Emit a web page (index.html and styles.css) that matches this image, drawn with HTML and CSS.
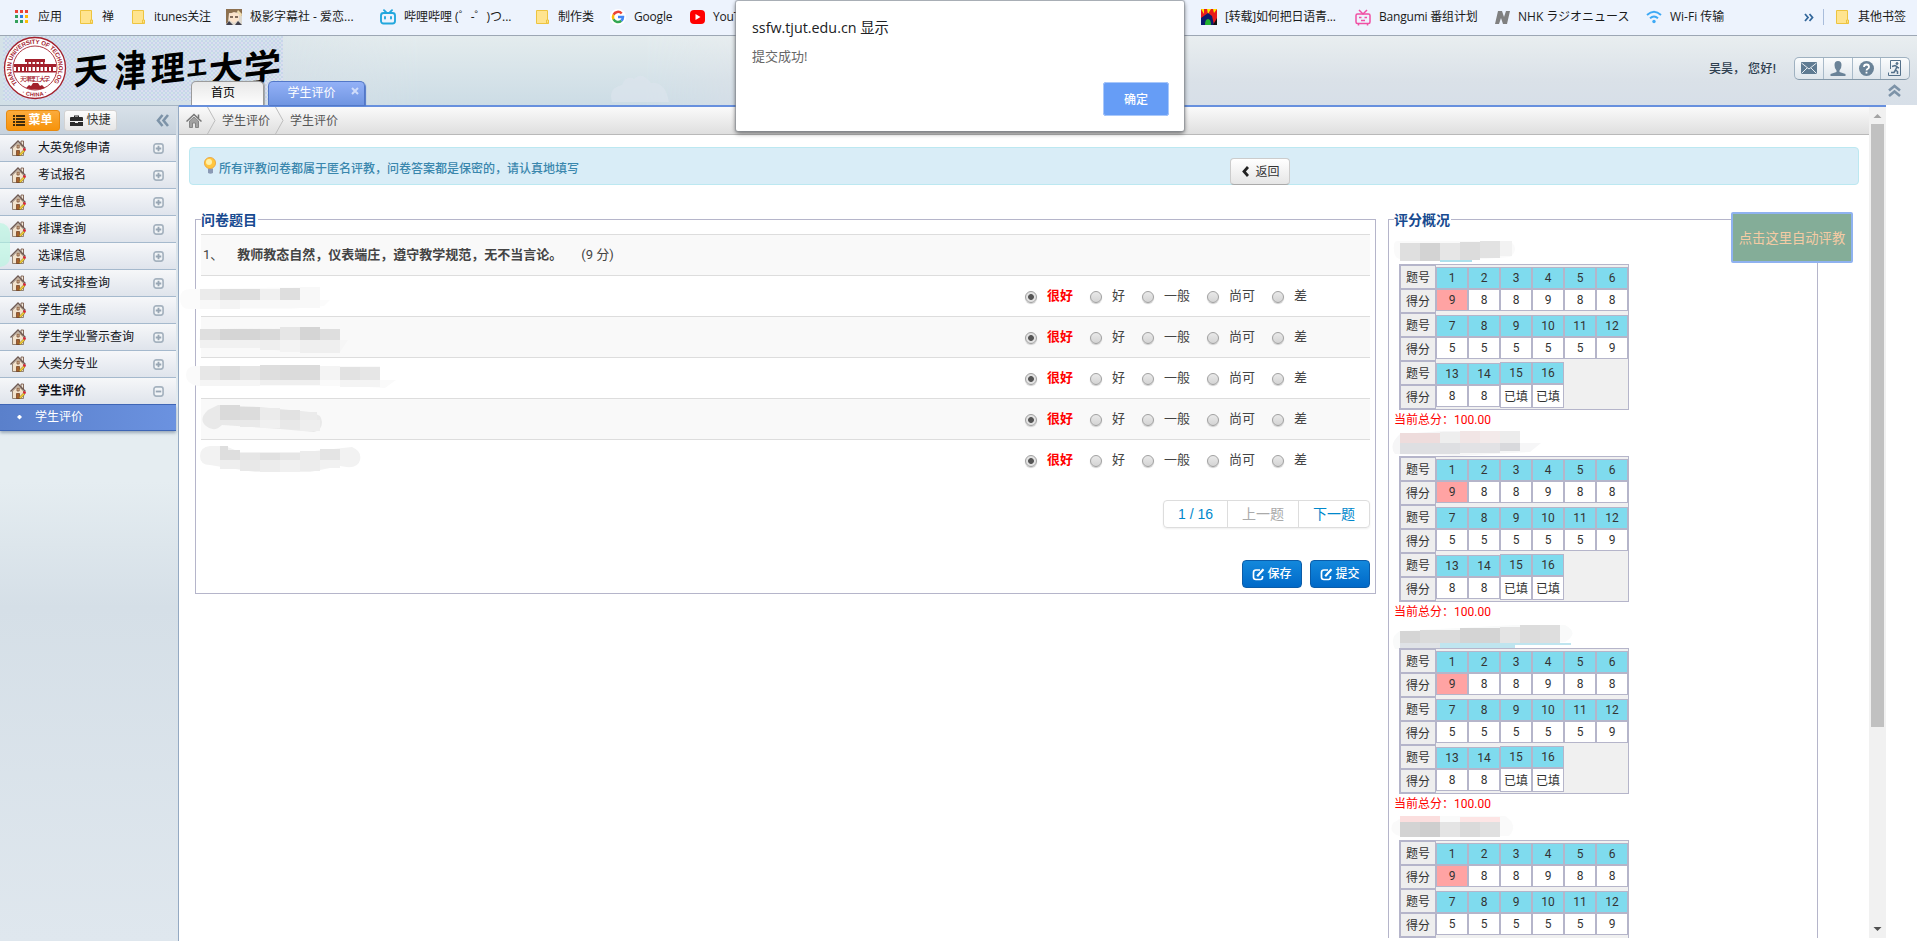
FILE: index.html
```html
<!DOCTYPE html>
<html lang="zh-CN">
<head>
<meta charset="utf-8">
<title>学生评价</title>
<link rel="stylesheet" href="styles.css">
</head>
<body>
<svg class="defs" width="0" height="0">
  <symbol id="folder" viewBox="0 0 14 16"><path d="M.5 1.500h11v10h1v3h-12z" fill="#ffe48f" stroke="#edc440"/><path d="M10.500 14v-3h2v3z" fill="#ffe48f" stroke="#edc440"/></symbol>
  <symbol id="house" viewBox="0 0 16 16"><path d="M11 1h2.500v5H11z" fill="#f0e9dc" stroke="#6d4a3a" stroke-width=".8"/><path d="M2.500 8v7.500h11V8L8 2.500z" fill="#f2e2cc" stroke="#7d6a58" stroke-width=".8"/><path d="M.5 8.500L8 1l7.500 7.500" fill="none" stroke="#6f5a52" stroke-width="1.300"/><path d="M7 5h2.200v3H7z" fill="#d8b28c" stroke="#6b4632" stroke-width=".7"/><path d="M6.500 10.500h3v5h-3z" fill="#a5602c" stroke="#6b3b1c" stroke-width=".7"/><path d="M9 14.500l4.500-4.500 1.500 1.300-4.500 4.200z" fill="#f6d02f" stroke="#86702a" stroke-width=".6"/><path d="M13.500 8.500l2 2" stroke="#dc2637" stroke-width="2"/></symbol>
  <symbol id="plus" viewBox="0 0 12 12"><rect x="1" y="1" width="10" height="10" rx="2.500" fill="#f1f4f7" stroke="#a5b2bf" stroke-width="1.800"/><path d="M3 6h6M6 3v6" stroke="#98a6b4" stroke-width="2"/></symbol>
  <symbol id="minus" viewBox="0 0 12 12"><rect x="1" y="1" width="10" height="10" rx="2.500" fill="#f1f4f7" stroke="#a5b2bf" stroke-width="1.800"/><path d="M3 6h6" stroke="#98a6b4" stroke-width="2"/></symbol>
  <symbol id="edit" viewBox="0 0 13 13"><path d="M8 2H4Q1.500 2 1.500 4.500v4.800Q1.500 11.500 4 11.500h4.500Q10.500 11.500 10.500 9.300V8" fill="none" stroke="#fff" stroke-width="1.700"/><path d="M5.200 8.200L11.500 1.200" stroke="#fff" stroke-width="2.200"/></symbol>
</svg>

<div class="bookmarks">
  <span class="bm" style="left:15px"><svg width="14" height="14"><g fill="#ea4335"><path d="M0 0h3v3H0zM5 0h3v3H5zM10 0h3v3h-3z"/></g><path d="M0 5h3v3H0zM0 10h3v3H0zM5 10h3v3H5z" fill="#34a05a"/><path d="M5 5h3v3H5z" fill="#2b7de9"/><path d="M10 5h3v3h-3zM10 10h3v3h-3z" fill="#fbbc05"/></svg></span>
  <span class="bm" style="left:38px">应用</span>
  <span class="bm" style="left:80px"><svg width="14" height="16"><use href="#folder"/></svg></span>
  <span class="bm" style="left:102px">禅</span>
  <span class="bm" style="left:132px"><svg width="14" height="16"><use href="#folder"/></svg></span>
  <span class="bm narrow" style="left:154px">itunes关注</span>
  <span class="bm" style="left:226px"><svg width="16" height="16"><rect width="16" height="16" fill="#ddd8cf"/><path d="M0 0h16v7L13 3 8 4 3 4 2 13 0 15z" fill="#8d7050"/><path d="M3 5l5-2 5 2v6l-5 3-5-3z" fill="#fbe3cc"/><path d="M4 8h3M9 8h3" stroke="#5b4538" stroke-width="1.500"/><path d="M0 16l3-4 4 4zM9 16l3-4 4 4z" fill="#40404e"/><path d="M12 1l4 4-1 3-4-5z" fill="#f0dcb0"/></svg></span>
  <span class="bm" style="left:250px">极影字幕社 - 爱恋...</span>
  <span class="bm" style="left:380px"><svg width="16" height="16" fill="none" stroke="#22a7dd" stroke-width="1.900" stroke-linecap="round"><rect x="1" y="4" width="14" height="10.500" rx="2.500"/><path d="M4 1.200l2 2M12 1.200l-2 2M5 8v1.500M11 8v1.500"/></svg></span>
  <span class="bm" style="left:404px">哔哩哔哩 (゜-゜)つ...</span>
  <span class="bm" style="left:536px"><svg width="14" height="16"><use href="#folder"/></svg></span>
  <span class="bm" style="left:558px">制作类</span>
  <span class="bm" style="left:610px"><svg width="16" height="16" fill="none" stroke-width="2.500"><circle cx="8" cy="8" r="8" fill="#fff"/><path d="M11.700 4.500A5 5 0 0 0 3.500 5.700" stroke="#ea4335"/><path d="M3.500 5.700a5 5 0 0 0 0 4.600" stroke="#fbbc05"/><path d="M3.500 10.300a5 5 0 0 0 7.800 1.500" stroke="#34a853"/><path d="M11.300 11.800A5 5 0 0 0 13 8H8" stroke="#4285f4"/></svg></span>
  <span class="bm narrow" style="left:634px">Google</span>
  <span class="bm" style="left:690px"><svg width="15" height="16"><rect y="1" width="15" height="14" rx="4" fill="#f00"/><path d="M5.500 5l5 3-5 3z" fill="#fff"/></svg></span>
  <span class="bm narrow" style="left:713px">YouTube</span>
  <span class="bm" style="left:1201px"><svg width="16" height="16"><rect width="16" height="16" fill="#e8191d"/><path d="M0 0l3 5V0zM6 0l1 5 3-5zM12 0l1 4 3-4z" fill="#ffe600"/><path d="M0 16V9l7-5 4 3 2 9z" fill="#0b1b6e"/><path d="M4 16q0-6 3-6t3 6z" fill="#22b231"/><path d="M12 16l4-7v7z" fill="#111"/></svg></span>
  <span class="bm narrow" style="left:1225px">[转载]如何把日语青...</span>
  <span class="bm" style="left:1355px"><svg width="16" height="17" fill="none" stroke="#f04fa3" stroke-width="1.500"><rect x="1" y="5" width="14" height="9.500" rx="1.500"/><path d="M4 1l4 4 4-4M3.500 15v1.500M12.500 15v1.500M4 8.500h2.500M9.500 8.500H12M6 11.500h4"/></svg></span>
  <span class="bm narrow" style="left:1379px">Bangumi 番组计划</span>
  <span class="bm" style="left:1495px"><svg width="15" height="13"><path d="M3 0h4l2 6 2-6h4l-3 13H8L6 7l-2 6H0z" fill="#808080"/></svg></span>
  <span class="bm" style="left:1518px">NHK ラジオニュース</span>
  <span class="bm" style="left:1646px"><svg width="16" height="14" fill="none" stroke="#3ea9f5" stroke-width="1.900"><path d="M1 5q7-6.500 14 0M4 8.200q4-3.600 8 0"/><circle cx="8" cy="11.500" r="1.700" fill="#3ea9f5" stroke="none"/></svg></span>
  <span class="bm" style="left:1670px">Wi-Fi 传输</span>
  <span class="bm" style="left:1804px"><svg width="10" height="9" fill="none" stroke="#33679b" stroke-width="1.800"><path d="M1 1l3 3.500L1 8M5.500 1l3 3.500-3 3.500"/></svg></span>
  <span class="bm bm-divider" style="left:1823px"></span>
  <span class="bm" style="left:1836px"><svg width="14" height="16"><use href="#folder"/></svg></span>
  <span class="bm" style="left:1858px">其他书签</span>
</div>

<header class="header">
  <svg class="clouds" width="500" height="69"><defs><linearGradient id="sky" x2="0" y2="1"><stop offset="0" stop-color="#e4ecee"/><stop offset="1" stop-color="#ccdce5"/></linearGradient><linearGradient id="fade"><stop offset="0" stop-color="#fff" stop-opacity="0"/><stop offset=".3" stop-color="#fff"/><stop offset=".75" stop-color="#fff"/><stop offset="1" stop-color="#fff" stop-opacity="0"/></linearGradient><mask id="m"><rect width="500" height="69" fill="url(#fade)"/></mask></defs><rect width="500" height="69" fill="url(#sky)" mask="url(#m)"/><path d="M342 66q-4-14 10-17 4-10 12-6 8-8 17 4 14-2 18 19z" fill="#dbe4ec" opacity=".7"/></svg>
  <div class="logo">
    <svg class="seal" width="64" height="64" viewBox="0 0 64 64"><circle cx="32" cy="32" r="30.500" fill="#fff" stroke="#a3202c" stroke-width="1.300"/><circle cx="32" cy="32" r="22" fill="none" stroke="#a3202c" stroke-width=".9"/><defs><path id="arc" d="M14.500 47.500A23.700 23.700 0 1 1 49.500 47.500"/><path id="arc2" d="M19 57.500Q32 63.500 45 57.500"/></defs><text font-size="6.100" font-weight="700" fill="#a3202c" font-family="Liberation Sans"><textPath href="#arc" textLength="111" lengthAdjust="spacing">TIANJIN UNIVERSITY OF TECHNOLOGY</textPath></text><text font-size="5.500" font-weight="700" fill="#a3202c" font-family="Liberation Sans"><textPath href="#arc2" textLength="26">· CHINA ·</textPath></text><path d="M22 23h20v3H22zM11 28h42v3H11zM13 31h2v5h-2zM17 31h2v5h-2zM21 31h2v5h-2zM24 26h1.500v10H24zM28 26h1.500v10H28zM32 26h1.500v10H32zM36 26h1.500v10H36zM40 26h1.500v10H40zM44 31h2v5h-2zM48 31h2v5h-2zM11 35h42v1.500H11z" fill="#a3202c"/><text x="32" y="44.500" text-anchor="middle" font-size="6" font-weight="500" fill="#a3202c" font-family="Noto Sans CJK SC" textLength="30">天津理工大学</text><path d="M23 52l3-3 2 1 2-3h5l2 3 2-1 3 3q-9 3-19 0z" fill="#a3202c"/></svg>
    <div class="wordmark"><i class="c1">天</i><i class="c2">津</i><i class="c3">理</i><i class="c4">工</i><i class="c5">大</i><i class="c6">学</i></div>
  </div>
  <nav class="tabs">
    <div class="tab">首页</div>
    <div class="tab tab-on">学生评价<svg width="8" height="8"><path d="M1 1l6 6M7 1L1 7" stroke="#cfdcfa" stroke-width="2"/></svg></div>
  </nav>
  <div class="user">
    <div class="user-row"><span>吴昊，</span><span>您好!</span>
      <div class="tools">
        <b><svg width="16" height="12"><path d="M0 0h16v12H0z" fill="#5f7b92"/><path d="M.5 1l7.500 6 7.500-6M.5 11.500L6 6M15.500 11.500L10 6" fill="none" stroke="#e6edf2"/></svg></b>
        <b><svg width="16" height="15"><path d="M8 0q3.500 0 3.500 4T9.500 9.500V11l6 2v2H.5v-2l6-2V9.500Q4.500 8 4.500 4T8 0z" fill="#6a8398"/></svg></b>
        <b><svg width="15" height="15"><circle cx="7.500" cy="7.500" r="7.500" fill="#6a8398"/><path d="M5 6q0-2.500 2.500-2.500T10 6q0 1.200-1.200 1.800T7.500 9.500M7.500 10.800v1.700" fill="none" stroke="#fff" stroke-width="1.800"/></svg></b>
        <b><svg width="14" height="16" fill="none" stroke="#53708a"><path d="M2.500 9V.5h10v15H.5v-3"/><circle cx="9" cy="3.500" r="1" fill="#53708a"/><path d="M4 6.500l3-1 2 1-1.500 3.500 2 1.500V14M8.500 7l2.500 1M7.500 10L6 12.500H3" stroke-width="1.500"/></svg></b>
      </div>
    </div>
    <svg class="collapse" width="13" height="13" fill="none" stroke="#7d93a8" stroke-width="2.600"><path d="M1 6.500L6.500 2 12 6.500M1 12l5.500-4.500L12 12"/></svg>
  </div>
</header>

<div class="body">
  <aside class="side">
    <div class="side-bar">
      <span class="btn-menu"><svg width="12" height="11" fill="#3d2a0c"><path d="M0 0h2v2H0zM3 0h9v2H3zM0 3h2v2H0zM3 3h9v2H3zM0 6h2v2H0zM3 6h9v2H3zM0 9h2v2H0zM3 9h9v2H3z"/></svg>菜单</span>
      <span class="btn-quick"><svg width="13" height="11" fill="#2b2b2b"><path d="M4 2V.5h5V2h3q1 0 1 1v3H0V3q0-1 1-1zM5 2h3v-.6H5zM0 7h5v1h3V7h5v4H0z"/></svg>快捷</span>
      <svg class="fold" width="13" height="13" fill="none" stroke="#7d93a8" stroke-width="2.600"><path d="M6.500 1L2 6.500 6.500 12M12 1L7.500 6.500 12 12"/></svg>
    </div>
    <ul class="menu" id="menu"></ul>
    <div class="sub"><i></i>学生评价</div>
    <div class="bubble"></div>
  </aside>

  <main class="main">
    <div class="pane">
      <div class="crumbs">
        <svg width="16" height="15" fill="none" stroke="#757575" stroke-width="1.500"><path d="M.5 8.500L8 1.500l7.500 7M12.500 5V1.500"/><path d="M3.500 8v6.500h3V10h3v4.500h3V8L8 4z" fill="#a2a2a2" stroke="#858585" stroke-width="1"/></svg>
        <svg class="sep" width="9" height="27"><path d="M.5 0L8 13.500.5 27" fill="none" stroke="#bdbdbd"/></svg>
        <span>学生评价</span>
        <svg class="sep" width="9" height="27"><path d="M.5 0L8 13.500.5 27" fill="none" stroke="#bdbdbd"/></svg>
        <span>学生评价</span>
      </div>
      <div class="notice">
        <svg width="12" height="17"><path d="M4 11.500h5V16q-2.500 1.500-5 0z" fill="#8a9ab5"/><circle cx="6" cy="6" r="5.600" fill="#ffc63e" stroke="#ea9a2c" stroke-width=".7"/><circle cx="5" cy="5" r="3" fill="#fff0a8"/></svg>
        <span>所有评教问卷都属于匿名评教，问卷答案都是保密的，请认真地填写</span>
        <a class="back"><svg width="7" height="11"><path d="M6 1L2 5.500 6 10" fill="none" stroke="#222" stroke-width="2.800"/></svg>返回</a>
      </div>
      <div class="cols">
        <section class="box quiz">
          <h3>问卷题目</h3>
          <div class="row title"><span>1、</span><strong>教师教态自然，仪表端庄，遵守教学规范，无不当言论。</strong><span>(9 分)</span></div>
          <div id="rows"></div>
          <div class="pager"><span class="p1">1 / 16</span><span class="p2">上一题</span><span class="p3">下一题</span></div>
          <div class="actions"><a><svg width="13" height="13"><use href="#edit"/></svg>保存</a><a><svg width="13" height="13"><use href="#edit"/></svg>提交</a></div>
        </section>
        <section class="box summary">
          <h3>评分概况</h3>
          <div id="scores"></div>
        </section>
      </div>
      <div class="auto">点击这里自动评教</div>
    </div>
    <div class="scroll">
      <svg width="17" height="17"><path d="M4.500 11h8L8.500 7z" fill="#a3a3a3"/></svg>
      <div class="thumb"></div>
      <svg class="down" width="17" height="17"><path d="M4.500 6h8l-4 4z" fill="#505050"/></svg>
    </div>
  </main>
</div>

<div class="dialog">
  <div class="d-title">ssfw.tjut.edu.cn 显示</div>
  <div class="d-msg">提交成功!</div>
  <div class="d-ok">确定</div>
</div>
<script src="app.js"></script>
</body>
</html>
```
FILE: styles.css
```css
* { box-sizing: border-box; }
html, body { margin: 0; height: 941px; overflow: hidden; }
body { font: 12px/16px Roboto, "Noto Sans CJK SC", sans-serif; color: #333; background: #fff; }
.defs { position: absolute; }
svg { display: block; flex: none; }
i { font-style: normal; }

.bookmarks { position: relative; height: 36px; background: #edf3fd; border-bottom: 1px solid #9da7b4; font-family: "Open Sans", "Noto Sans CJK SC", "Noto Sans CJK JP", sans-serif; color: #1a1a1a; }
.bm { position: absolute; top: 0; height: 34px; display: flex; align-items: center; white-space: nowrap; }
.narrow { letter-spacing: -.2px; }
.bm-divider { width: 1px; height: 16px; top: 9px; background: #a9bddb; }

.header { position: relative; height: 69px; background: linear-gradient(#e9eef0, #dae1e8 65%, #d7dfe8); display: flex; justify-content: space-between; }
.header::before { content: ""; position: absolute; left: 0; top: 0; width: 700px; height: 69px; background: linear-gradient(90deg, #d0dfe6cc, #d0dfe600); }
.clouds { position: absolute; left: 270px; top: 0; }
.logo { position: relative; margin-left: 3px; width: 280px; height: 65px; background: conic-gradient(#c8d6ea 25%, #dbdff0 0 50%, #c8d6ea 0 75%, #d5e5ea 0) 0 0 / 4px 4px; }
.seal { position: absolute; left: 0; top: 0; }
.wordmark { position: absolute; left: 0; top: 0; font: 700 34px/60px "Noto Sans CJK SC", sans-serif; color: #000; }
.wordmark i { position: absolute; top: 1px; transform: skewX(-8deg) rotate(-7deg); }
.wordmark .c1 { left: 71px; top: 3px; }
.wordmark .c2 { left: 109px; font-size: 37px; top: 2px; transform: skewX(-6deg) rotate(-5deg) scaleX(.85) scaleY(1.15); }
.wordmark .c3 { left: 148px; }
.wordmark .c4 { left: 184px; font-size: 20px; font-weight: 900; }
.wordmark .c5 { left: 206px; }
.wordmark .c6 { left: 241px; font-size: 37px; top: -1px; }
.tabs { position: absolute; left: 191px; top: 45px; display: flex; gap: 4px; align-items: flex-end; }
.tab { width: 73px; height: 24px; border: 1px solid #9b9b9b; border-bottom: 0; border-radius: 5px 5px 0 0; background: linear-gradient(#e8e8e8, #fdfdfd); color: #000; text-align: center; line-height: 23px; padding-right: 9px; box-shadow: 1px 0 1px #7778; }
.tab-on { position: relative; width: 97px; background: linear-gradient(#93b1f7, #7095e1); border-color: #5277c8; color: #fff; padding-right: 10px; box-shadow: 1px 1px 1px #5277c8; }
.tab-on svg { position: absolute; right: 5px; top: 5px; }
.user { position: relative; width: 220px; padding-top: 20px; }
.user-row { display: flex; align-items: center; font-weight: 500; color: #2f4050; height: 24px; padding-left: 12px; }
.user-row span { padding-top: 2px; }
.user-row span:nth-child(2) { margin-left: 3px; letter-spacing: .4px; }
.tools { display: flex; margin-left: auto; margin-right: 7px; width: 116px; height: 23px; border: 1px solid #9fb1c0; border-bottom-color: #8599a9; border-radius: 5px; background: linear-gradient(#fafcfd, #dfe6ec); }
.tools b { flex: 1; display: flex; align-items: center; justify-content: center; }
.tools b + b { border-left: 1px solid #a8bac9; }
.collapse { position: absolute; right: 16px; top: 48px; }

.body { display: flex; height: 836px; }
.side { position: relative; width: 179px; flex: none; border-right: 1px solid #94a9c2; border-top: 1px solid #a5b4c2; background: linear-gradient(#d3dde6, #e5edf1 40%, #e5edf1 45%, #d5dfe7 60%, #dfe7ee); padding-right: 2px; }
.side-bar { height: 29px; display: flex; align-items: center; padding: 0 7px 0 6px; gap: 4px; background: linear-gradient(#d8e1e9, #c7d2dd); border-bottom: 1px solid #abb9c6; }
.side-bar span { display: flex; align-items: center; justify-content: center; gap: 3px; height: 21px; border-radius: 3px; }
.btn-menu { width: 54px; background: linear-gradient(#fbab3c, #f7930a); border: 1px solid #e78a10; color: #fff; font-weight: 600; }
.btn-quick { width: 53px; background: linear-gradient(#fcfcfc, #e6e6e6); border: 1px solid #d3d3d3; color: #333; }
.fold { margin-left: auto; }
.menu { margin: 0; padding: 0; list-style: none; color: #10131a; }
.menu li { height: 27px; display: flex; align-items: center; padding: 0 12px 0 10px; border-bottom: 1px solid #a5b9cd; background: linear-gradient(#f6f7f9, #dfe4ec); }
.menu li > svg:first-child { margin: 0 12px 0 0; }
.menu li > svg:last-child { margin: 0 0 0 auto; }
.menu li.on { font-weight: 600; border-bottom-color: #3a62b5; }
.sub { height: 26px; display: flex; align-items: center; padding: 0 0 1px 17px; background: linear-gradient(90deg, #5a80cb, #6b92e0); border-bottom: 1px solid #3e66b6; color: #fff; box-shadow: 0 2px 3px #9aa9b8; }
.sub i { width: 5px; height: 5px; margin-right: 13px; background: #fff; clip-path: polygon(50% 0, 75% 25%, 100% 50%, 50% 100%, 0 50%); }
.bubble { position: absolute; left: 0; top: 117px; width: 10px; height: 44px; border-radius: 0 22px 22px 0 / 0 22px 22px 0; background: #b4f7df99; }

.main { flex: none; width: 1707px; height: 833px; border-top: 2px solid #6790de; display: flex; overflow: hidden; }
.pane { position: relative; width: 1690px; height: 831px; overflow: hidden; }
.crumbs { height: 28px; display: flex; align-items: center; padding-left: 7px; background: linear-gradient(#fafafa, #dfdfdf); border-bottom: 1px solid #b9b9b9; color: #555; }
.crumbs .sep { margin: 0 6px 0 5px; }
.notice { margin: 12px 10px 0; height: 38px; display: flex; align-items: center; background: #d9edf7; border: 1px solid #bce8f1; border-radius: 4px; color: #3a87ad; font-weight: 500; padding-left: 14px; position: relative; }
.notice > svg { margin: 0 3px 2px 0; }
.notice span { padding-top: 6px; }
.back { position: absolute; left: 1040px; top: 10px; width: 60px; height: 27px; display: flex; align-items: center; justify-content: center; gap: 6px; padding-left: 2px; border: 1px solid #ccc; border-bottom-color: #aaa; border-radius: 4px; background: linear-gradient(#fff, #e6e6e6); color: #333; font-weight: 400; }

.cols { display: flex; padding: 34px 0 0 16px; gap: 12px; align-items: flex-start; }
.box { border: 1px solid #b5b5ca; position: relative; }
.box h3 { position: absolute; left: 5px; top: -10px; margin: 0; font: 600 14px/18px "Noto Sans CJK SC", sans-serif; color: #174a90; background: #fff; padding-right: 1px; }
.quiz { width: 1181px; height: 375px; padding: 14px 5px 0; }
.summary { width: 430px; height: 800px; padding: 20px 0 0 5px; }
.row { position: relative; height: 41px; border-top: 1px solid #ddd; display: flex; align-items: center; font-size: 13px; color: #444; }
.row:nth-child(even), .row.title { background: #f9f9f9; }
.title { padding: 0 2px 0; }
.title strong { font-weight: 600; margin: 0 19px 0 14px; }
.mask { position: absolute; left: -21px; top: -1px; }
.opts { margin-left: 824px; display: flex; align-items: center; padding-bottom: 1px; }
.opts i { width: 12px; height: 12px; margin-top: 2px; border-radius: 50%; border: 1px solid #a0a0a0; background: linear-gradient(#e9e9e9, #d4d4d4); box-shadow: 0 1px 1px #ccc; }
.opts span { margin: 0 17px 0 10px; }
.opts i.sel { background: radial-gradient(circle, #555 0 2.5px, #e2e2e2 3.3px); }
.opts .best { color: #f00; font-weight: 600; }
.pager { margin: 20px 0 0 auto; width: 207px; height: 28px; display: flex; border: 1px solid #ddd; border-radius: 4px; box-shadow: 0 1px 2px #0001; font-size: 14px; line-height: 27px; text-align: center; color: #0088cc; }
.p1 { width: 63px; font-family: "Liberation Sans", sans-serif; } .p2 { width: 72px; color: #aaa; border: solid #ddd; border-width: 0 1px; } .p3 { flex: 1; }
.actions { display: flex; justify-content: flex-end; gap: 8px; margin-top: 32px; }
.actions a { width: 60px; height: 28px; display: flex; align-items: center; justify-content: center; gap: 2px; border: 1px solid #0b5ca8; border-radius: 4px; background: linear-gradient(#1388dc, #0069c8); color: #fff; font-weight: 500; }

.block { position: relative; height: 192px; }
.block .mask { left: -9px; top: -1px; }
.block:last-child .mask { top: 1px; }
.grid { position: absolute; left: 5px; top: 24px; width: 230px; height: 146px; border: 1px solid #b5b5ca; background: #f0f0f0; display: flex; }
.labels { width: 36px; }
.labels div { height: 24px; border: 1px solid #b5b5ca; background: #eee; text-align: center; line-height: 24px; }
.cells { width: 192px; display: flex; flex-wrap: wrap; align-content: flex-start; }
.cell { width: 32px; height: 48px; padding-top: 2px; text-align: center; line-height: 20px; }
.cell b, .cell u { display: block; height: 22px; border: 1px solid #b5b5ca; font-weight: 400; text-decoration: none; background: #fff; }
.cell b { background: #7fdbee; }
.cell.cur u { background: #ffa3a3; }
.cell.tall { padding-top: 1px; }
.cell.tall u { height: 24px; line-height: 24px; }
.total { position: absolute; left: 0; top: 172px; color: #f00; white-space: nowrap; }
.auto { position: absolute; left: 1552px; top: 105px; width: 122px; height: 51px; border: 2px solid #8fb2f0; border-radius: 2px; background: #84ad98; color: #f5cba4; font-size: 13.300px; line-height: 50px; text-align: center; }

.scroll { width: 17px; background: #f1f1f1; display: flex; flex-direction: column; }
.thumb { margin: 0 2px; height: 603px; background: #c1c1c1; }
.down { margin-top: auto; }

.dialog { position: absolute; left: 736px; top: 1px; width: 448px; height: 130px; background: #fff; border-radius: 2px; box-shadow: 0 0 1px 1px #8c9096aa, 0 2px 5px #0009; padding: 17px 16px 0; font-family: "Open Sans", "Noto Sans CJK SC", sans-serif; }
.d-title { font-size: 14.300px; line-height: 20px; color: #202124; }
.d-msg { margin-top: 10px; font-size: 13px; color: #666; }
.d-ok { position: absolute; left: 367px; top: 81px; width: 66px; height: 34px; border: 1px solid #5490f5; outline: 1px solid #a9c8fa; outline-offset: -1px; border-radius: 3px; background: #669df6; color: #fff; font-weight: 500; text-align: center; line-height: 33px; }
```
FILE: app.js
```javascript
const byId = (id) => document.getElementById(id);

const menu = ['大英免修申请', '考试报名', '学生信息', '排课查询', '选课信息', '考试安排查询', '学生成绩', '学生学业警示查询', '大类分专业', '学生评价'];
byId('menu').innerHTML = menu.map((t, i) => {
  const open = i === menu.length - 1;
  return `<li class="${open ? 'on' : ''}"><svg width="16" height="16"><use href="#house"/></svg>${t}<svg width="11" height="11"><use href="#${open ? 'minus' : 'plus'}"/></svg></li>`;
}).join('');

// Redacted names: outline path and its fill, then blocks [x, y, width, height, colour].
const rowMasks = [
  ['M10 14L140 12V25H150L144 31L110 34H10Q0 34 0 24T10 14z', '#fbfbfb', [20,14,20,11,'#ebebeb'],[40,14,40,11,'#dedede'],[80,14,20,11,'#f0f0f0'],[100,13,20,12,'#dedede'],[120,12,20,13,'#f8f8f8'],[20,25,20,9,'#f8f8f8'],[40,25,20,9,'#f3f3f3'],[60,25,80,8,'#f8f8f8']],
  ['M22 14L60 12L160 13V24H168L160 36L100 35L80 32H22Q17 24 22 14z', '#f6f6f6', [20,13,20,11,'#dfdfdf'],[40,13,40,11,'#d5d5d5'],[80,13,20,11,'#d9d9d9'],[100,11,20,13,'#e6e6e6'],[120,11,20,13,'#d5d5d5'],[140,13,20,11,'#dedede'],[20,24,60,8,'#f1f1f1'],[80,24,20,10,'#eee'],[100,24,20,12,'#f3f3f3'],[120,24,40,13,'#efefef']],
  ['M16 9H200V23H216L205 31L170 29H18Q6 27 6 18T16 9z', '#fafafa', [20,9,20,14,'#e7e7e7'],[40,9,20,14,'#dedede'],[60,9,20,14,'#e5e5e5'],[80,8,20,15,'#dedede'],[100,8,40,15,'#dbdbdb'],[140,9,20,14,'#f4f4f4'],[160,10,20,13,'#e2e2e2'],[180,10,20,13,'#e6e6e6'],[20,23,60,6,'#f5f5f5'],[80,23,60,5,'#efefef'],[160,23,40,7,'#f4f4f4']],
  ['M38 7L80 9L130 14Q142 16 142 24T134 34L100 31L42 27Q34 35 26 28T28 12z', '#e9e9e9', [40,7,20,15,'#dadada'],[60,9,20,13,'#dcdcdc'],[80,10,20,12,'#ebebeb'],[100,12,20,10,'#e2e2e2'],[120,14,17,8,'#ebebeb'],[60,22,20,7,'#e9e9e9'],[80,22,20,8,'#f0f0f0'],[100,22,20,9,'#e8e8e8'],[120,22,20,11,'#eee']],
  ['M30 7H45L60 13H125L172 8Q182 12 180 21Q178 31 160 27L130 33H75L42 28L30 26Q20 26 20 17T30 7z', '#f2f2f2', [40,7,8,14,'#dedede'],[48,11,12,10,'#dedede'],[60,14,20,7,'#e6e6e6'],[80,14,20,7,'#e1e1e1'],[100,14,20,7,'#e6e6e6'],[120,12,20,9,'#ececec'],[140,10,20,11,'#e4e4e4'],[40,21,20,9,'#eee'],[60,21,20,11,'#e8e8e8'],[80,21,20,12,'#ececec'],[100,21,20,12,'#f0f0f0'],[120,21,20,11,'#ececec'],[140,21,20,8,'#f1f1f1']]
];
const scoreMasks = [
  ['M12 2H125Q135 10 125 18L100 20H20Q10 22 9 12T12 2z', '#fafafa', [15,4,20,18,'#dfdfdf'],[35,4,20,18,'#d3d3d3'],[55,4,20,17,'#e6e6e6'],[75,3,20,18,'#dcdcdc'],[95,2,20,17,'#e2e2e2'],[115,2,12,15,'#f2f2f2'],[55,21,32,2,'#abe0ec']],
  ['M15 3L60 0H135V12H156L145 21L70 25L10 23Q3 14 15 3z', '#f6f6f7', [15,2,40,10,'#eedcdc'],[55,1,20,11,'#eee'],[75,0,20,12,'#f1e5e5'],[95,0,20,12,'#f3eaea'],[115,0,20,12,'#ececec'],[15,12,60,11,'#dedfe2'],[75,12,40,10,'#e2e2e5'],[115,12,20,8,'#d8d9dc']],
  ['M15 8L130 2H180Q195 10 180 19L60 27L10 26Q4 14 15 8z', '#f9fafa', [15,8,20,12,'#d5d5d5'],[35,7,40,13,'#dadada'],[75,5,40,15,'#d4d4d4'],[115,4,20,16,'#e4e4e4'],[135,2,20,18,'#dcdcdc'],[155,2,20,18,'#dedede'],[15,20,40,7,'#dfe2e6'],[55,20,40,6,'#bfe5ef'],[95,20,35,5,'#bfe5ef'],[130,20,56,2,'#bfe5ef']],
  ['M20 -1H120Q134 8 124 19H15Q3 16 8 6z', '#fafafa', [15,-1,40,6,'#fbdede'],[75,0,40,5,'#fde5e5'],[15,5,20,15,'#d3d3d3'],[35,5,20,15,'#cecece'],[55,5,20,15,'#e4e4e4'],[75,5,20,15,'#dadada'],[95,5,20,15,'#e0e0e0']]
];
const mask = ([outline, fill, ...blocks]) => `<svg class="mask" width="230" height="41" overflow="visible"><path d="${outline}" fill="${fill}"/>${blocks.map(([x, y, w, h, c]) => `<rect x="${x}" y="${y}" width="${w}" height="${h}" fill="${c}"/>`).join('')}</svg>`;

byId('rows').innerHTML = rowMasks.map((m) => `<div class="row">${mask(m)}<div class="opts">${['很好', '好', '一般', '尚可', '差'].map((t, i) => `<i class="${i ? '' : 'sel'}"></i><span class="${i ? '' : 'best'}">${t}</span>`).join('')}</div></div>`).join('');

const points = [9, 8, 8, 9, 8, 8, 5, 5, 5, 5, 5, 9, 8, 8, '已填', '已填'];
const cells = points.map((p, i) => `<div class="cell${i === 0 ? ' cur' : ''}${i > 13 ? ' tall' : ''}"><b>${i + 1}</b><u>${p}</u></div>`).join('');
const labels = '<div>题号</div><div>得分</div>'.repeat(3);
byId('scores').innerHTML = scoreMasks.map((m) => `<div class="block">${mask(m)}<div class="grid"><div class="labels">${labels}</div><div class="cells">${cells}</div></div><div class="total">当前总分：100.00</div></div>`).join('');
```
